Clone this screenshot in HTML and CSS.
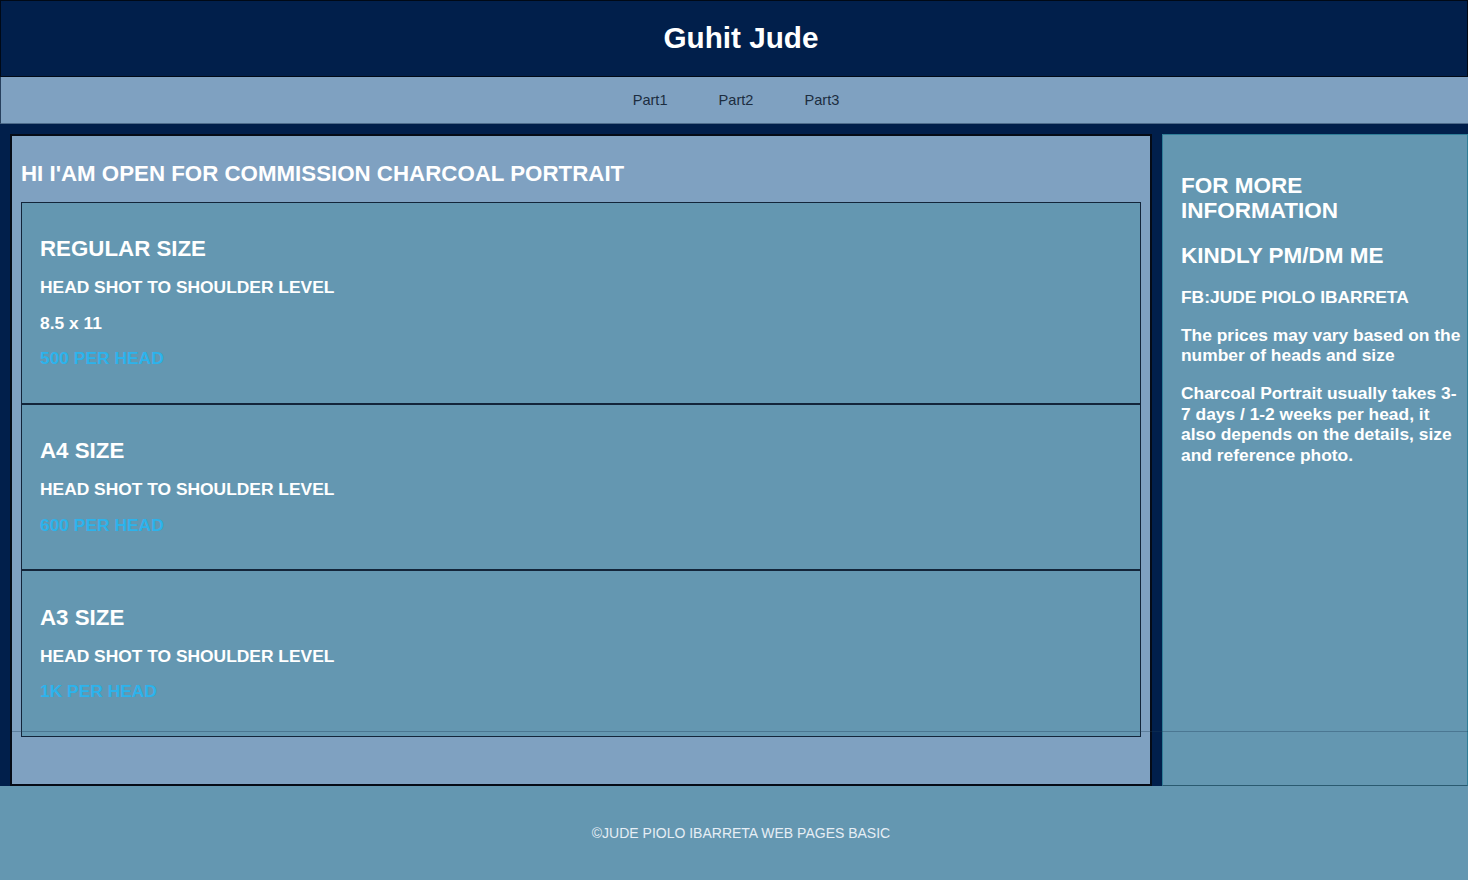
FILE: index.html
```html
<!DOCTYPE html>
<html lang="en">
<head>
<meta charset="utf-8">
<title>Guhit Jude</title>
<link rel="stylesheet" href="styles.css">
</head>
<body>
<header class="site-header">
  <h1 class="site-title">Guhit Jude</h1>
</header>
<nav class="site-nav">
  <a class="nav-link" href="#">Part1</a>
  <a class="nav-link" href="#">Part2</a>
  <a class="nav-link" href="#">Part3</a>
</nav>
<div class="main">
  <section class="content">
    <h2 class="intro">HI I'AM OPEN FOR COMMISSION CHARCOAL PORTRAIT</h2>
    <div class="boxes">
      <div class="box">
        <h2 class="box-title">REGULAR SIZE</h2>
        <h3 class="box-line">HEAD SHOT TO SHOULDER LEVEL</h3>
        <h3 class="box-line">8.5 x 11</h3>
        <h3 class="box-line price">500 PER HEAD</h3>
      </div>
      <div class="box">
        <h2 class="box-title">A4 SIZE</h2>
        <h3 class="box-line">HEAD SHOT TO SHOULDER LEVEL</h3>
        <h3 class="box-line price">600 PER HEAD</h3>
      </div>
      <div class="box">
        <h2 class="box-title">A3 SIZE</h2>
        <h3 class="box-line">HEAD SHOT TO SHOULDER LEVEL</h3>
        <h3 class="box-line price">1K PER HEAD</h3>
      </div>
    </div>
  </section>
  <aside class="sidebar">
    <h2 class="side-title">FOR MORE INFORMATION</h2>
    <h2 class="side-title">KINDLY PM/DM ME</h2>
    <h3 class="side-text">FB:JUDE PIOLO IBARRETA</h3>
    <h3 class="side-text">The prices may vary based on the number of heads and size</h3>
    <h3 class="side-text">Charcoal Portrait usually takes 3-7 days / 1-2 weeks per head, it also depends on the details, size and reference photo.</h3>
  </aside>
</div>
<footer class="site-footer">
  <p class="copy">©JUDE PIOLO IBARRETA WEB PAGES BASIC</p>
</footer>
</body>
</html>
```

FILE: styles.css
```css
* { box-sizing: border-box; }

html, body {
  margin: 0;
  padding: 0;
}

body {
  background: #011f4b;
  font-family: "Liberation Sans", Arial, sans-serif;
  color: #ffffff;
  width: 1468px;
  height: 880px;
  overflow: hidden;
}

.site-header {
  height: 77px;
  border: 1px solid #000916;
  background: #011f4b;
  display: flex;
  align-items: center;
  justify-content: center;
  padding-left: 14px;
}

.site-title {
  margin: 0;
  font-size: 29.7px;
  font-weight: bold;
  color: #ffffff;
  line-height: 1;
  position: relative;
  top: -1px;
}

.site-nav {
  height: 47px;
  background: #7fa1c1;
  border-left: 1px solid #27405e;
  border-bottom: 1px solid #4d6b8b;
  display: flex;
  justify-content: center;
  align-items: center;
  gap: 51px;
  padding-left: 3px;
}

.nav-link {
  font-size: 14.6px;
  color: #1c2d40;
  text-decoration: none;
}

.main {
  position: relative;
  display: flex;
  gap: 10px;
  padding: 10px 0 0 10px;
  height: 662px;
}

.main::after {
  content: "";
  position: absolute;
  left: 12px;
  right: 0;
  top: 607px;
  height: 1px;
  background: rgba(30, 60, 90, 0.35);
}

.content {
  flex: none;
  width: 1142px;
  background: #7fa1c1;
  border: 2px solid #050b16;
  padding: 9px 9px 0 9px;
}

.intro {
  margin: 16px 0 15px 0;
  font-size: 22.3px;
  font-weight: bold;
  color: #ffffff;
  line-height: 25.6px;
}

.boxes {
  display: flex;
  flex-direction: column;
}

.box {
  background: #6497b1;
  border: 1px solid #13253a;
  padding: 18.5px 17px 19px 18px;
}

.box-title {
  margin: 15px 0 14px 0;
  font-size: 22.3px;
  line-height: 25.6px;
  font-weight: bold;
  color: #ffffff;
}

.box-line {
  margin: 15.5px 0;
  font-size: 17.4px;
  line-height: 20px;
  font-weight: bold;
  color: #ffffff;
}

.price {
  color: #2cb3ec;
}

.sidebar {
  flex: none;
  width: 306px;
  background: #6497b1;
  border: 1px solid #2f7e98;
  border-bottom-color: #2a5a70;
  padding: 19px 4.5px 0 18px;
}

.side-title {
  margin: 18.5px 0;
  font-size: 22.5px;
  line-height: 25.8px;
  font-weight: bold;
  color: #ffffff;
}

.side-text {
  margin: 17.4px 0;
  font-size: 17.4px;
  line-height: 20.5px;
  font-weight: bold;
  color: #ffffff;
}

.site-footer {
  height: 94px;
  background: #6497b1;
  display: flex;
  align-items: center;
  justify-content: center;
  padding-left: 14px;
}

.copy {
  margin: 0;
  font-size: 14px;
  color: #e6eef5;
}
```
